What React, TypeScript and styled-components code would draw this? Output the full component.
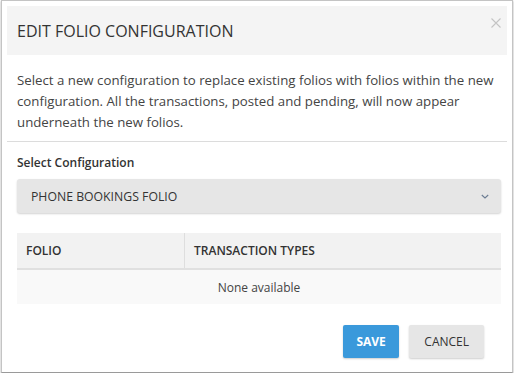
import React from "react";
import styled, { createGlobalStyle } from "styled-components";

const Global = createGlobalStyle`
  html, body { margin: 0; padding: 0; background: #ffffff; }
  body { font-family: "Open Sans", "Liberation Sans", sans-serif; color: #333; }
  * { box-sizing: border-box; }
`;

const Window = styled.div`
  width: 512px;
  height: 373px;
  margin-left: 1px;
  border: 1px solid #c4c4c4;
  border-bottom-color: #9a9a9a;
  box-shadow: 0 1px 2px rgba(0, 0, 0, 0.35);
  background: #fff;
  padding: 5px 5px 0 5px;
  display: flex;
  flex-direction: column;
`;

const Header = styled.div`
  height: 49px;
  background: #f4f4f4;
  display: flex;
  align-items: center;
  padding: 0 12px 0 10px;
  position: relative;
`;

const Title = styled.h1`
  margin: 0;
  font-size: 16px;
  font-weight: 400;
  color: #333;
`;

const Close = styled.svg`
  position: absolute;
  right: 6px;
  top: 12px;
`;

const Intro = styled.p`
  margin: 0;
  padding: 15px 6px 8px 10px;
  font-size: 13.25px;
  line-height: 21px;
  color: #444;
  border-bottom: 1px solid #dcdcdc;
`;

const Content = styled.div`
  padding: 13px 6px 0 10px;
  display: flex;
  flex-direction: column;
`;

const Label = styled.div`
  font-size: 12px;
  font-weight: 600;
  color: #333;
  line-height: 16px;
  margin-bottom: 8px;
`;

const Select = styled.div`
  height: 34px;
  background: #e6e6e6;
  border-radius: 3px;
  box-shadow: 0 1px 2px rgba(0, 0, 0, 0.18);
  display: flex;
  align-items: center;
  justify-content: space-between;
  padding: 0 12px 0 14px;
  font-size: 12.25px;
  color: #333;
`;

const Table = styled.div`
  margin-top: 20px;
  display: flex;
  flex-direction: column;
`;

const HeadRow = styled.div`
  display: grid;
  grid-template-columns: 168px 1fr;
  height: 37px;
  background: #f2f2f2;
  border-bottom: 2px solid #e0e0e0;
`;

const HeadCell = styled.div<{ $divider?: boolean }>`
  display: flex;
  align-items: center;
  padding-left: 9px;
  font-size: 12px;
  font-weight: 600;
  color: #333;
  border-right: ${(p) => (p.$divider ? "1px solid #dedede" : "none")};
`;

const EmptyRow = styled.div`
  height: 34px;
  background: #f9f9f9;
  display: flex;
  align-items: center;
  justify-content: center;
  font-size: 12px;
  color: #444;
`;

const Footer = styled.div`
  display: flex;
  justify-content: flex-end;
  gap: 10px;
  padding: 21px 23px 0 0;
`;

const Button = styled.button<{ $primary?: boolean }>`
  height: 33px;
  border: none;
  border-radius: 2px;
  padding: 0 ${(p) => (p.$primary ? "13.5px" : "15px")};
  font-family: "Open Sans", "Liberation Sans", sans-serif;
  font-size: 12px;
  font-weight: ${(p) => (p.$primary ? 700 : 400)};
  color: ${(p) => (p.$primary ? "#ffffff" : "#333")};
  background: ${(p) => (p.$primary ? "#3a99db" : "#e6e6e6")};
  box-shadow: 0 1px 2px rgba(0, 0, 0, 0.2);
`;

const Chevron = () => (
  <svg width="8" height="5" viewBox="0 0 8 5" fill="none">
    <path d="M0.8 1l3.2 3 3.2-3" stroke="#6b7c93" strokeWidth="1.1" />
  </svg>
);

export default function App() {
  return (
    <>
      <Global />
      <Window>
        <Header>
          <Title>EDIT FOLIO CONFIGURATION</Title>
          <Close width="10" height="10" viewBox="0 0 10 10" fill="none">
            <path d="M0.5 0.5l9 9M9.5 0.5l-9 9" stroke="#c4c4c4" strokeWidth="1.1" />
          </Close>
        </Header>
        <Intro>
          Select a new configuration to replace existing folios with folios within the new
          configuration. All the transactions, posted and pending, will now appear underneath the
          new folios.
        </Intro>
        <Content>
          <Label>Select Configuration</Label>
          <Select>
            <span>PHONE BOOKINGS FOLIO</span>
            <Chevron />
          </Select>
          <Table>
            <HeadRow>
              <HeadCell $divider>FOLIO</HeadCell>
              <HeadCell>TRANSACTION TYPES</HeadCell>
            </HeadRow>
            <EmptyRow>None available</EmptyRow>
          </Table>
        </Content>
        <Footer>
          <Button $primary>SAVE</Button>
          <Button>CANCEL</Button>
        </Footer>
      </Window>
    </>
  );
}
